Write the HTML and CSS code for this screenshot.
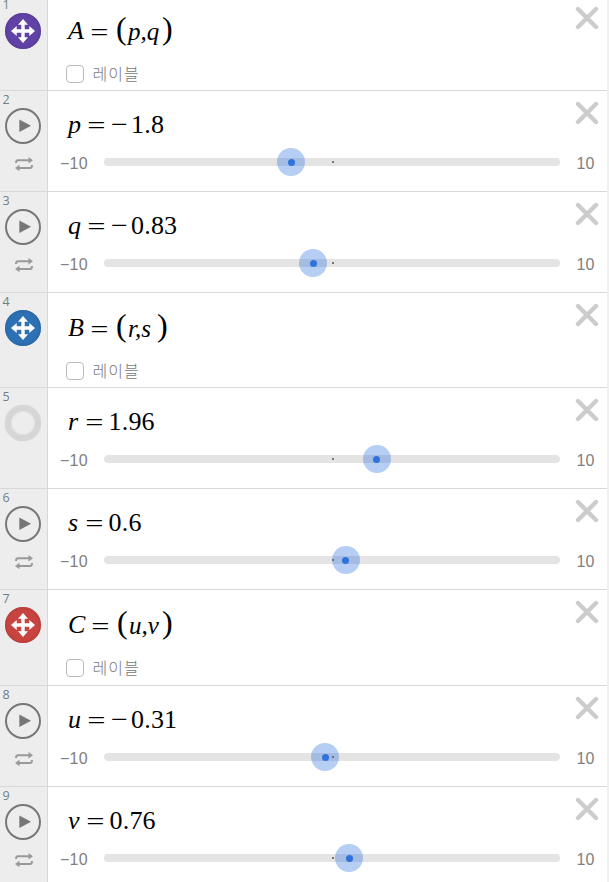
FILE: index.html
```
<!DOCTYPE html>
<html lang="ko">
<head>
<meta charset="utf-8">
<title>수식 목록</title>
<link rel="stylesheet" href="styles.css">
</head>
<body>
<svg class="defs" width="0" height="0">
<symbol id="move" viewBox="0 0 24 24"><path d="M12 0 17 5.7H13.7V10.3H18.3V7L24 12 18.3 17V13.7H13.7V18.3H17L12 24 7 18.3H10.3V13.7H5.7V17L0 12 5.7 7V10.3H10.3V5.7H7Z" fill="#fff"/></symbol>
<symbol id="play" viewBox="0 0 36 36"><circle cx="18" cy="18" r="17" fill="none" stroke="#777" stroke-width="2"/><path d="M14.3 11.5V24L26 17.7Z" fill="#777"/></symbol>
<symbol id="loop" viewBox="0 0 18 14"><path d="M1 6Q1 3.2 3 3.2H14M17 8Q17 11 15 11H4" fill="none" stroke="#999" stroke-width="2"/><path d="M13.5 0 18 3.2 13.5 6.4ZM4.5 7.8 0 11 4.5 14.2Z" fill="#999"/></symbol>
<symbol id="close" viewBox="0 0 24 24"><path d="M3 3 21 21M21 3 3 21" stroke="#ccc" stroke-width="4.4" stroke-linecap="round"/></symbol>
</svg>
<main class="list" id="list"></main>
<script src="app.js"></script>
</body>
</html>
```
FILE: styles.css
```
* { box-sizing: border-box; }
body { margin: 0; background: #fff; overflow: hidden; font-family: "Liberation Sans", "Noto Sans CJK KR", sans-serif; }
.defs { display: block; }
.list { width: 609px; height: 890px; margin-top: -4px; border-right: 2px solid #f0f0f0; }
.row { position: relative; display: grid; grid-template-columns: 48px 1fr; height: 101px; border-bottom: 1px solid #d8d8d8; }
.point { height: 95px; }
.tall { height: 96px; }
.gutter { background: #ededed; border-right: 1px solid #d8d8d8; }
.num { height: 17px; padding: 2px 0 0 2.5px; font: 12.5px/14px "Open Sans", sans-serif; color: #6f7f86; }
.icon { display: flex; align-items: center; justify-content: center; width: 36px; height: 36px; margin-left: 5px; border-radius: 50%; }
.icon.purple { background: #6042a6; box-shadow: inset 0 0 3px #4c3186; }
.icon.blue { background: #2d70b3; box-shadow: inset 0 0 3px #245b92; }
.icon.red { background: #c74440; box-shadow: inset 0 0 3px #a33532; }
.icon.empty { border: 6px solid #d6d6d6; box-shadow: inset 0 0 2px #ccc, 0 0 1px #bbb; }
.play { display: block; width: 36px; height: 36px; margin-left: 5px; }
.move { width: 24px; height: 24px; }
.loop { display: block; width: 18px; height: 14px; margin: 13px 0 0 15px; }
.close { position: absolute; top: 10px; right: 8px; width: 24px; height: 24px; }
.math { display: flex; height: 42px; padding: 17px 0 0 20px; font: 26px/34px "Liberation Serif", serif; color: #000; white-space: pre; }
.point .math { padding-top: 18px; height: 60px; }
.var { font-style: italic; }
.eq { width: 17px; margin: 1px 6px 0 7px; display: flex; justify-content: center; }
.eq span { transform: scale(1.24, .9); }
.minus { width: 17px; margin-right: 3px; display: flex; justify-content: center; }
.minus span { transform: scaleX(1.15); }
.value { letter-spacing: .2px; }
.paren { font-size: 32px; width: 10px; line-height: 29px; }
.point .eq { margin-right: 8px; }
.args { padding-left: 2px; font-style: italic; font-size: 25px; line-height: 36px; }
.label { display: flex; align-items: center; gap: 8.5px; height: 18px; margin: 9px 0 0 18px; font: 300 16px/16px "Noto Sans CJK KR", sans-serif; letter-spacing: 1px; color: #777; }
.label .text { margin-top: -2px; }
.box { width: 18px; height: 18px; border: 1px solid #bbb; border-radius: 4px; background: #fff; }
.slider { display: grid; grid-template-columns: 44px 456px 1fr; align-items: center; height: 28px; margin: 15px 0 0 12px; font-size: 16px; color: #808080; }
.min, .max { padding-top: 3px; letter-spacing: .2px; }
.max { padding-left: 16.5px; }
.track { position: relative; height: 8px; border-radius: 4px; background: #e4e4e4; }
.zero { position: absolute; left: 228px; top: 3px; width: 2px; height: 2px; background: #777; }
.thumb { position: absolute; top: -10px; width: 28px; height: 28px; border-radius: 50%; background: rgba(47,114,220,.35); }
.thumb::after { content: ""; position: absolute; left: 10.5px; top: 10.5px; width: 7px; height: 7px; border-radius: 50%; background: #2f72dc; }
```
FILE: app.js
```
const rows = [
  { v: "A", args: "p,q", color: "purple", w: 16, aw: 36 },
  { v: "p", value: "−1.8", x: 291, w: 13 },
  { v: "q", value: "−0.83", x: 313, w: 13 },
  { v: "B", args: "r,s", color: "blue", w: 16, aw: 31 },
  { v: "r", value: "1.96", x: 376.5, w: 10.5, off: true },
  { v: "s", value: "0.6", x: 345.5, w: 10.5 },
  { v: "C", args: "u,v", color: "red", w: 17, aw: 35, tall: true },
  { v: "u", value: "−0.31", x: 325, w: 13 },
  { v: "v", value: "0.76", x: 349, w: 11.5 }
];
const use = (name) => `<svg class="${name}"><use href="#${name}"/></svg>`;
document.getElementById("list").innerHTML = rows.map((r, i) => {
  const head = `<span class="var" style="width:${r.w}px">${r.v}</span><span class="eq"><span>=</span></span>`;
  const icon = r.args ? `<div class="icon ${r.color}">${use("move")}</div>`
    : r.off ? `<div class="icon empty"></div>` : use("play") + use("loop");
  const minus = r.value && r.value[0] === "−";
  const body = r.args
    ? `<div class="math">${head}<span class="paren">(</span><span class="args" style="width:${r.aw}px">${r.args}</span><span class="paren">)</span></div><label class="label"><span class="box"></span><span class="text">레이블</span></label>`
    : `<div class="math">${head}${minus ? '<span class="minus"><span>−</span></span>' : ""}<span class="value">${r.value.replace("−", "")}</span></div>
       <div class="slider"><span class="min">−10</span><div class="track"><i class="zero"></i><i class="thumb" style="left:${r.x - 118}px"></i></div><span class="max">10</span></div>`;
  return `<section class="row ${r.args ? "point" : ""} ${r.tall ? "tall" : ""}"><div class="gutter"><div class="num">${i + 1}</div>${icon}</div><div>${body}</div>${use("close")}</section>`;
}).join("");
```
